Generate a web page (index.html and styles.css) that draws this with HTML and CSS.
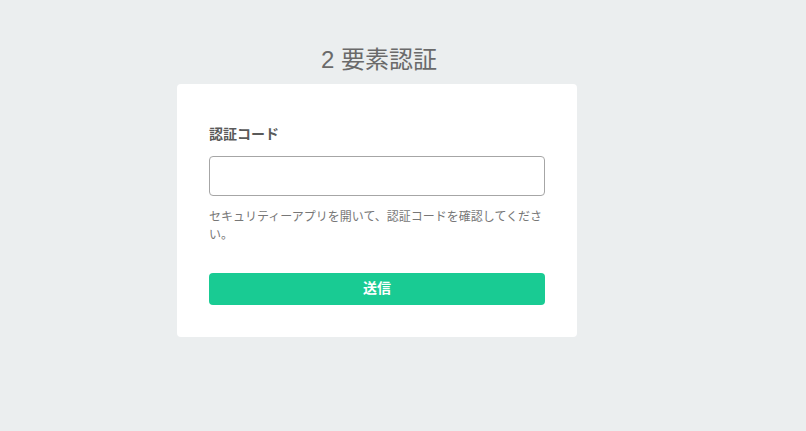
FILE: index.html
```html
<!DOCTYPE html>
<html lang="ja">
<head>
<meta charset="utf-8">
<title>2要素認証</title>
<link rel="stylesheet" href="styles.css">
</head>
<body>
<main class="page">
  <h1 class="title">2 要素認証</h1>
  <form class="card">
    <label class="label" for="code">認証コード</label>
    <input class="input" id="code" type="text">
    <p class="help">セキュリティーアプリを開いて、認証コードを確認してください。</p>
    <button class="button" type="button">送信</button>
  </form>
</main>
</body>
</html>
```

FILE: styles.css
```css
html, body {
  margin: 0;
  padding: 0;
}
body {
  background: #ebeeef;
  font-family: "Liberation Sans", "Noto Sans CJK JP", sans-serif;
  color: #555;
}
.page {
  width: 400px;
  margin: 0 0 0 177px;
  padding-top: 44px;
  display: flex;
  flex-direction: column;
}
.title {
  margin: 0 0 8px;
  padding-left: 4px;
  font-size: 24px;
  line-height: 32px;
  font-weight: 400;
  color: #6a6a6a;
  text-align: center;
}
.card {
  background: #fff;
  border-radius: 4px;
  padding: 40px 32px 32px;
  display: flex;
  flex-direction: column;
}
.label {
  font-size: 14px;
  line-height: 20px;
  font-weight: 700;
  color: #5a5a5a;
  margin-bottom: 12px;
}
.input {
  box-sizing: border-box;
  height: 40px;
  width: 100%;
  border: 1px solid #a6a6a6;
  border-radius: 4px;
  background: #fff;
  margin: 0;
  padding: 0 10px;
  font: inherit;
}
.help {
  margin: 12px 0 0;
  font-size: 12px;
  line-height: 18px;
  color: #777;
}
.button {
  margin-top: 29px;
  height: 32px;
  border: 0;
  border-radius: 4px;
  background: #19cb93;
  color: #fff;
  font: inherit;
  font-size: 14px;
  font-weight: 700;
  line-height: 20px;
  padding: 0 0 3px;
}
```
